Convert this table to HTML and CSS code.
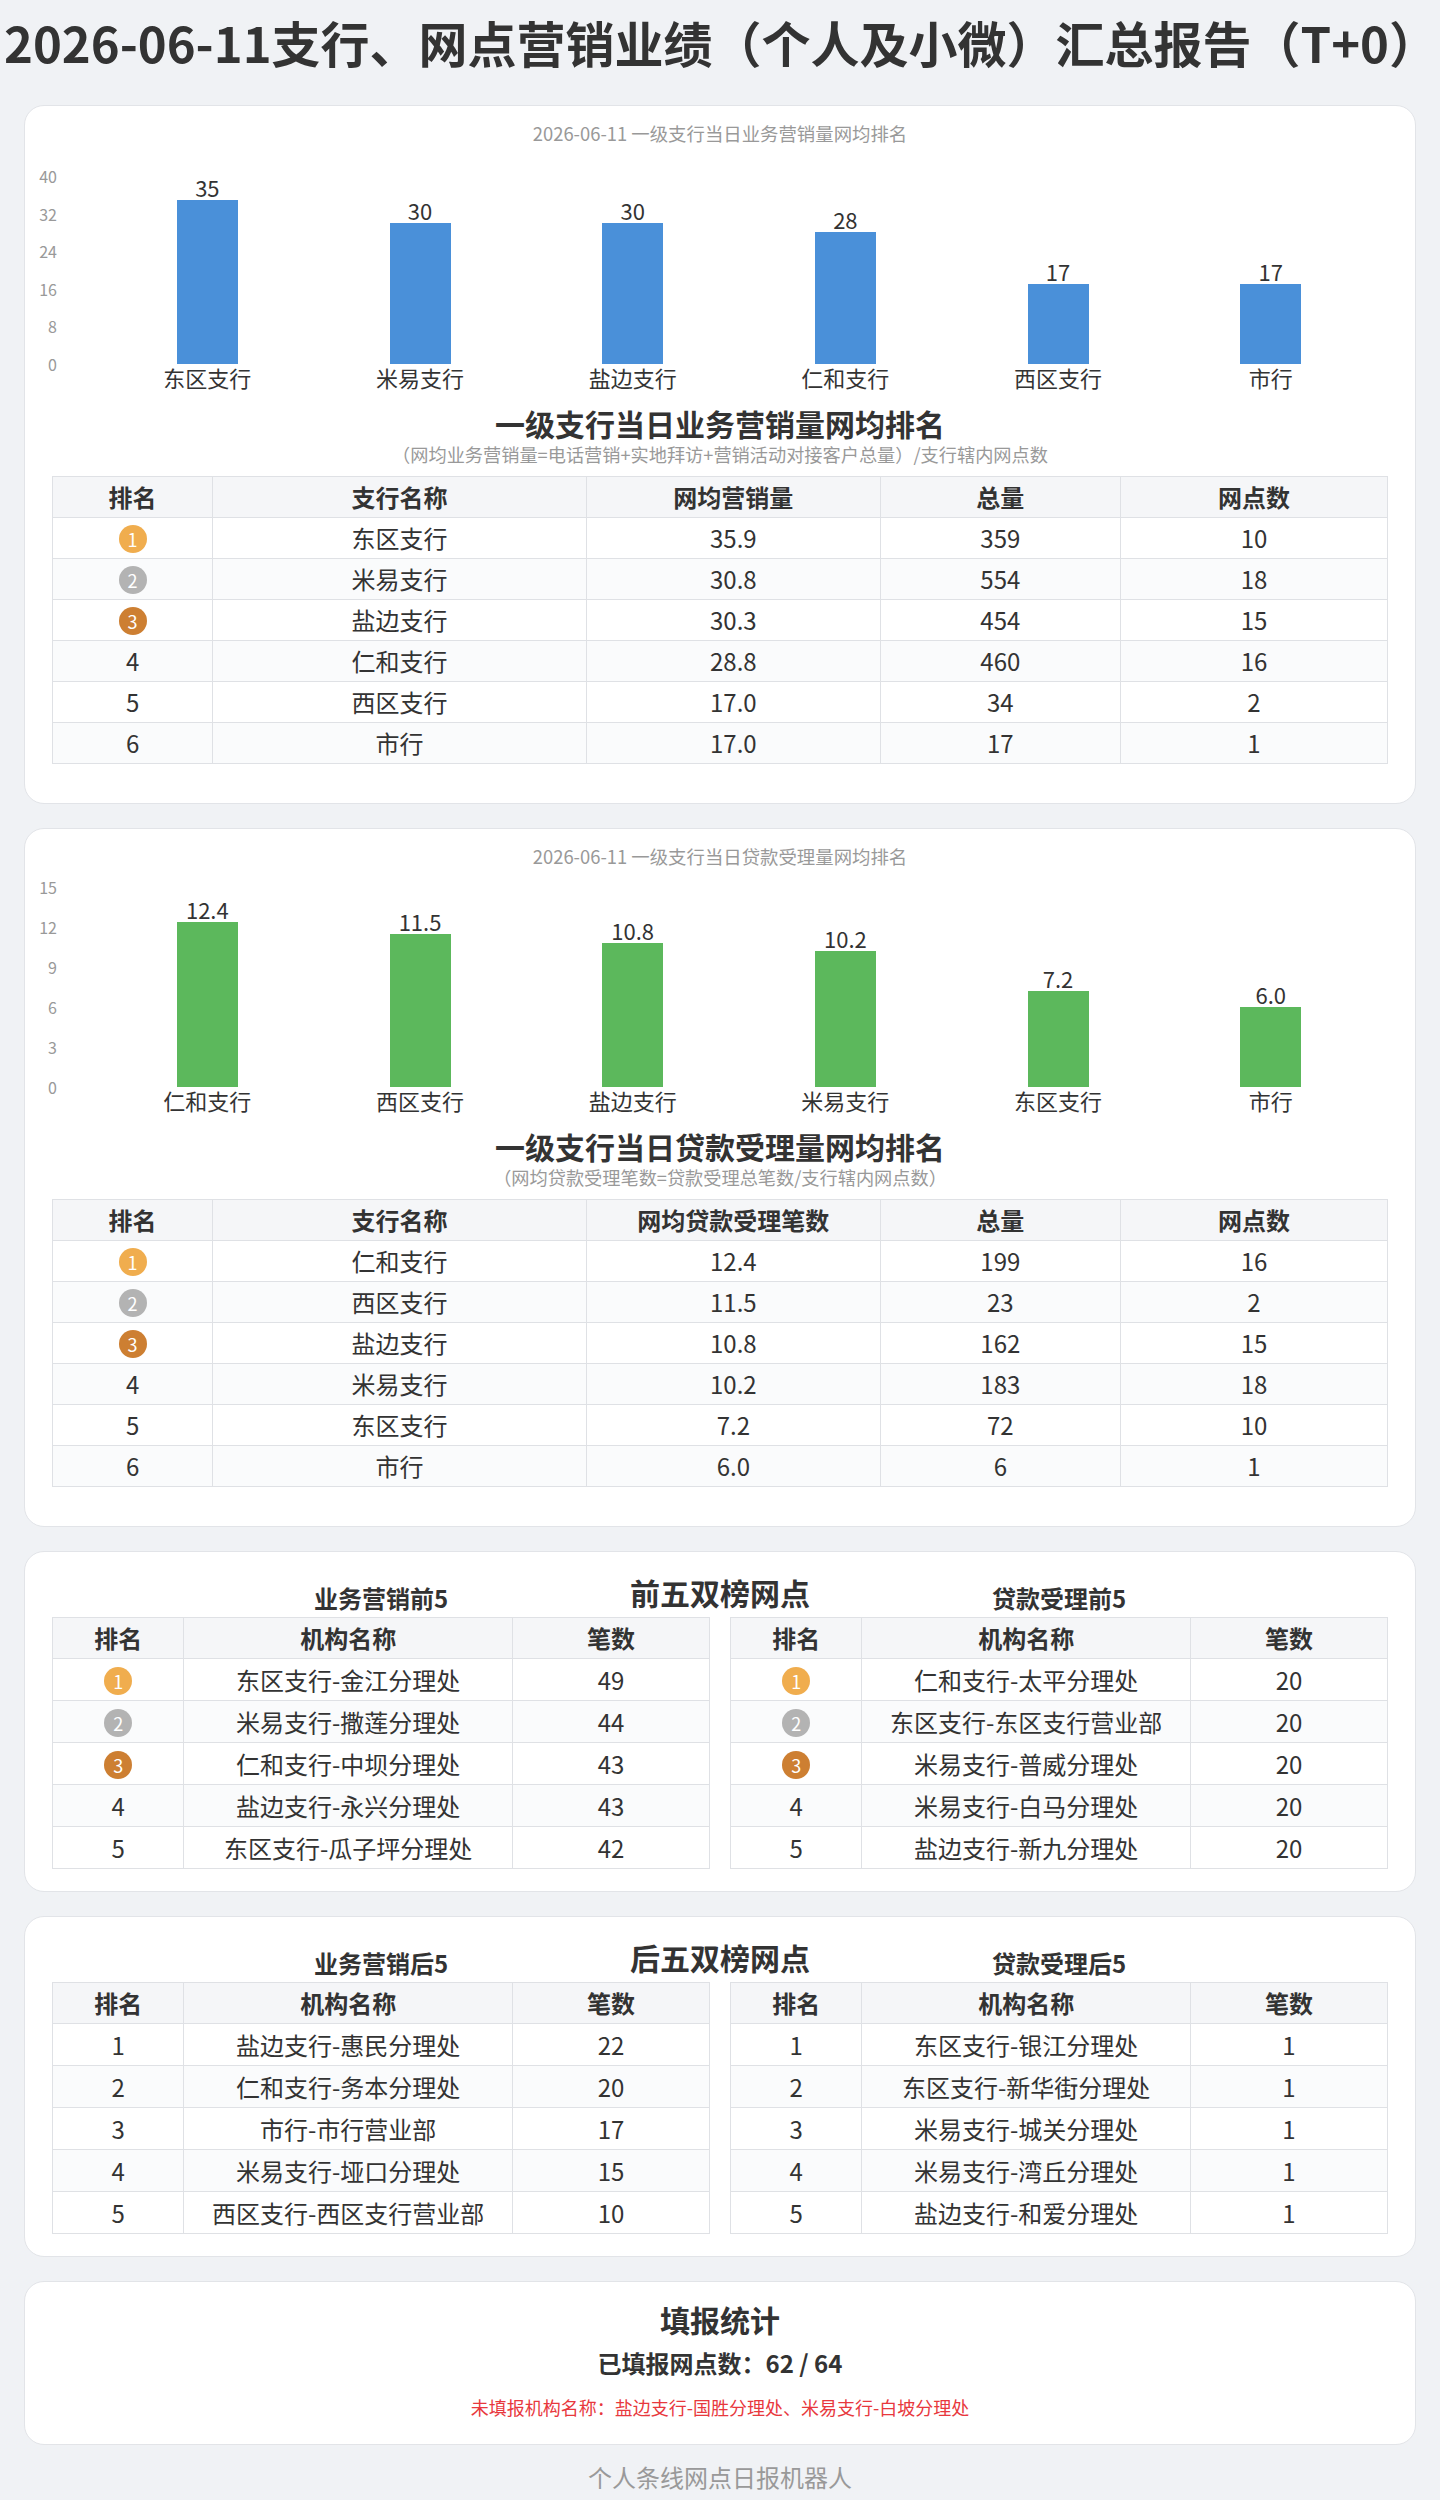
FILE: index.html
```html
<!DOCTYPE html>
<html lang="zh-CN">
<head>
<meta charset="utf-8">
<title>2026-06-11支行、网点营销业绩（个人及小微）汇总报告（T+0）</title>
<link rel="stylesheet" href="styles.css">
</head>
<body>
<h1 class="page-title">2026-06-11支行、网点营销业绩（个人及小微）汇总报告（T+0）</h1>
<main class="page">

  <section class="card chart-card">
    <div class="chart-title">2026-06-11 一级支行当日业务营销量网均排名</div>
    <div class="plot-row">
      <div class="y-axis">
        <div class="ticks" style="height:188px"><span>40</span><span>32</span><span>24</span><span>16</span><span>8</span><span>0</span></div>
      </div>
      <div class="bars">
        <div class="bar-col"><span class="bar-val">35</span><div class="bar blue" style="height:164.5px"></div></div>
        <div class="bar-col"><span class="bar-val">30</span><div class="bar blue" style="height:141px"></div></div>
        <div class="bar-col"><span class="bar-val">30</span><div class="bar blue" style="height:141px"></div></div>
        <div class="bar-col"><span class="bar-val">28</span><div class="bar blue" style="height:131.6px"></div></div>
        <div class="bar-col"><span class="bar-val">17</span><div class="bar blue" style="height:79.9px"></div></div>
        <div class="bar-col"><span class="bar-val">17</span><div class="bar blue" style="height:79.9px"></div></div>
      </div>
    </div>
    <div class="cat-row"><span>东区支行</span><span>米易支行</span><span>盐边支行</span><span>仁和支行</span><span>西区支行</span><span>市行</span></div>
    <h2 class="rank-title">一级支行当日业务营销量网均排名</h2>
    <p class="rank-sub">（网均业务营销量=电话营销+实地拜访+营销活动对接客户总量）/支行辖内网点数</p>
    <table class="data-table rank-table">
      <colgroup><col class="c12"><col class="c28"><col class="c22"><col class="c18"><col class="c20"></colgroup>
      <thead><tr><th>排名</th><th>支行名称</th><th>网均营销量</th><th>总量</th><th>网点数</th></tr></thead>
      <tbody>
        <tr><td><span class="medal gold">1</span></td><td>东区支行</td><td>35.9</td><td>359</td><td>10</td></tr>
        <tr><td><span class="medal silver">2</span></td><td>米易支行</td><td>30.8</td><td>554</td><td>18</td></tr>
        <tr><td><span class="medal bronze">3</span></td><td>盐边支行</td><td>30.3</td><td>454</td><td>15</td></tr>
        <tr><td>4</td><td>仁和支行</td><td>28.8</td><td>460</td><td>16</td></tr>
        <tr><td>5</td><td>西区支行</td><td>17.0</td><td>34</td><td>2</td></tr>
        <tr><td>6</td><td>市行</td><td>17.0</td><td>17</td><td>1</td></tr>
      </tbody>
    </table>
  </section>

  <section class="card chart-card">
    <div class="chart-title">2026-06-11 一级支行当日贷款受理量网均排名</div>
    <div class="plot-row">
      <div class="y-axis">
        <div class="ticks" style="height:200px"><span>15</span><span>12</span><span>9</span><span>6</span><span>3</span><span>0</span></div>
      </div>
      <div class="bars">
        <div class="bar-col"><span class="bar-val">12.4</span><div class="bar green" style="height:165.3px"></div></div>
        <div class="bar-col"><span class="bar-val">11.5</span><div class="bar green" style="height:153.3px"></div></div>
        <div class="bar-col"><span class="bar-val">10.8</span><div class="bar green" style="height:144px"></div></div>
        <div class="bar-col"><span class="bar-val">10.2</span><div class="bar green" style="height:136px"></div></div>
        <div class="bar-col"><span class="bar-val">7.2</span><div class="bar green" style="height:96px"></div></div>
        <div class="bar-col"><span class="bar-val">6.0</span><div class="bar green" style="height:80px"></div></div>
      </div>
    </div>
    <div class="cat-row"><span>仁和支行</span><span>西区支行</span><span>盐边支行</span><span>米易支行</span><span>东区支行</span><span>市行</span></div>
    <h2 class="rank-title">一级支行当日贷款受理量网均排名</h2>
    <p class="rank-sub">（网均贷款受理笔数=贷款受理总笔数/支行辖内网点数）</p>
    <table class="data-table rank-table">
      <colgroup><col class="c12"><col class="c28"><col class="c22"><col class="c18"><col class="c20"></colgroup>
      <thead><tr><th>排名</th><th>支行名称</th><th>网均贷款受理笔数</th><th>总量</th><th>网点数</th></tr></thead>
      <tbody>
        <tr><td><span class="medal gold">1</span></td><td>仁和支行</td><td>12.4</td><td>199</td><td>16</td></tr>
        <tr><td><span class="medal silver">2</span></td><td>西区支行</td><td>11.5</td><td>23</td><td>2</td></tr>
        <tr><td><span class="medal bronze">3</span></td><td>盐边支行</td><td>10.8</td><td>162</td><td>15</td></tr>
        <tr><td>4</td><td>米易支行</td><td>10.2</td><td>183</td><td>18</td></tr>
        <tr><td>5</td><td>东区支行</td><td>7.2</td><td>72</td><td>10</td></tr>
        <tr><td>6</td><td>市行</td><td>6.0</td><td>6</td><td>1</td></tr>
      </tbody>
    </table>
  </section>

  <section class="card dual-card">
    <h2 class="dual-title">前五双榜网点</h2>
    <div class="dual-grid">
      <div class="dual-col">
        <h3 class="dual-sub">业务营销前5</h3>
        <table class="data-table dual-table">
          <colgroup><col class="c20"><col class="c50"><col class="c30"></colgroup>
          <thead><tr><th>排名</th><th>机构名称</th><th>笔数</th></tr></thead>
          <tbody>
            <tr><td><span class="medal gold">1</span></td><td>东区支行-金江分理处</td><td>49</td></tr>
            <tr><td><span class="medal silver">2</span></td><td>米易支行-撒莲分理处</td><td>44</td></tr>
            <tr><td><span class="medal bronze">3</span></td><td>仁和支行-中坝分理处</td><td>43</td></tr>
            <tr><td>4</td><td>盐边支行-永兴分理处</td><td>43</td></tr>
            <tr><td>5</td><td>东区支行-瓜子坪分理处</td><td>42</td></tr>
          </tbody>
        </table>
      </div>
      <div class="dual-col">
        <h3 class="dual-sub">贷款受理前5</h3>
        <table class="data-table dual-table">
          <colgroup><col class="c20"><col class="c50"><col class="c30"></colgroup>
          <thead><tr><th>排名</th><th>机构名称</th><th>笔数</th></tr></thead>
          <tbody>
            <tr><td><span class="medal gold">1</span></td><td>仁和支行-太平分理处</td><td>20</td></tr>
            <tr><td><span class="medal silver">2</span></td><td>东区支行-东区支行营业部</td><td>20</td></tr>
            <tr><td><span class="medal bronze">3</span></td><td>米易支行-普威分理处</td><td>20</td></tr>
            <tr><td>4</td><td>米易支行-白马分理处</td><td>20</td></tr>
            <tr><td>5</td><td>盐边支行-新九分理处</td><td>20</td></tr>
          </tbody>
        </table>
      </div>
    </div>
  </section>

  <section class="card dual-card">
    <h2 class="dual-title">后五双榜网点</h2>
    <div class="dual-grid">
      <div class="dual-col">
        <h3 class="dual-sub">业务营销后5</h3>
        <table class="data-table dual-table">
          <colgroup><col class="c20"><col class="c50"><col class="c30"></colgroup>
          <thead><tr><th>排名</th><th>机构名称</th><th>笔数</th></tr></thead>
          <tbody>
            <tr><td>1</td><td>盐边支行-惠民分理处</td><td>22</td></tr>
            <tr><td>2</td><td>仁和支行-务本分理处</td><td>20</td></tr>
            <tr><td>3</td><td>市行-市行营业部</td><td>17</td></tr>
            <tr><td>4</td><td>米易支行-垭口分理处</td><td>15</td></tr>
            <tr><td>5</td><td>西区支行-西区支行营业部</td><td>10</td></tr>
          </tbody>
        </table>
      </div>
      <div class="dual-col">
        <h3 class="dual-sub">贷款受理后5</h3>
        <table class="data-table dual-table">
          <colgroup><col class="c20"><col class="c50"><col class="c30"></colgroup>
          <thead><tr><th>排名</th><th>机构名称</th><th>笔数</th></tr></thead>
          <tbody>
            <tr><td>1</td><td>东区支行-银江分理处</td><td>1</td></tr>
            <tr><td>2</td><td>东区支行-新华街分理处</td><td>1</td></tr>
            <tr><td>3</td><td>米易支行-城关分理处</td><td>1</td></tr>
            <tr><td>4</td><td>米易支行-湾丘分理处</td><td>1</td></tr>
            <tr><td>5</td><td>盐边支行-和爱分理处</td><td>1</td></tr>
          </tbody>
        </table>
      </div>
    </div>
  </section>

  <section class="card stat-card">
    <h2 class="stat-title">填报统计</h2>
    <div class="stat-count">已填报网点数：62 / 64</div>
    <div class="stat-missing">未填报机构名称：盐边支行-国胜分理处、米易支行-白坡分理处</div>
  </section>

  <footer class="page-footer">个人条线网点日报机器人</footer>
</main>
</body>
</html>
```

FILE: styles.css
```css
* { box-sizing: border-box; }

html, body {
  margin: 0;
  padding: 0;
  background: #f0f2f5;
}

body {
  font-family: "Noto Sans CJK SC", "Noto Sans", sans-serif;
  color: #333333;
}

.page-title {
  margin: 13px 0 0 0;
  padding-left: 4px;
  font-size: 49px;
  line-height: 58px;
  font-weight: 700;
  color: #333333;
  white-space: nowrap;
}

.page {
  padding: 34px 24px 0 24px;
  display: flex;
  flex-direction: column;
  gap: 24px;
}

.card {
  background: #ffffff;
  border: 1px solid #e2e4e8;
  border-radius: 20px;
  padding: 0 27px;
}

/* ---------- chart cards ---------- */
.chart-card {
  padding-top: 15px;
  padding-bottom: 39px;
}

.chart-title {
  text-align: center;
  font-size: 18.4px;
  line-height: 24px;
  color: #999999;
}

.plot-row {
  display: flex;
  height: 200px;
  margin: 19px 11px 0 -15px;
}

.y-axis {
  width: 64px;
  display: flex;
  flex-direction: column;
  justify-content: flex-end;
}

.ticks {
  display: flex;
  flex-direction: column;
  justify-content: space-between;
}

.ticks span {
  height: 0;
  display: flex;
  align-items: center;
  justify-content: flex-end;
  padding-right: 44px;
  font-size: 16px;
  line-height: 20px;
  color: #999999;
}

.bars {
  flex: 1;
  display: flex;
  align-items: flex-end;
}

.bar-col {
  flex: 1;
  display: flex;
  flex-direction: column;
  align-items: center;
}

.bar-val {
  font-size: 22px;
  line-height: 26px;
  color: #333333;
}

.bar {
  width: 61px;
}

.bar.blue { background: #4a90d9; }
.bar.green { background: #5cb85c; }

.cat-row {
  display: flex;
  margin: 0 11px 0 49px;
}

.cat-row span {
  flex: 1;
  text-align: center;
  font-size: 22px;
  line-height: 26px;
  color: #333333;
}

.rank-title {
  margin: 15.5px 0 0 0;
  text-align: center;
  font-size: 30px;
  line-height: 34px;
  font-weight: 700;
  color: #333333;
}

.rank-sub {
  margin: 3px 0 11.5px 0;
  text-align: center;
  font-size: 18.2px;
  line-height: 22px;
  color: #999999;
}

/* ---------- tables ---------- */
.data-table {
  width: 100%;
  border-collapse: collapse;
  table-layout: fixed;
}

.data-table th,
.data-table td {
  border: 1px solid #dfe1e5;
  text-align: center;
  padding: 0;
  font-size: 24px;
  color: #333333;
  white-space: nowrap;
}

.data-table th {
  background: #f5f6f8;
  font-weight: 700;
  line-height: 40px;
}

.data-table td {
  line-height: 40px;
}

.data-table tbody tr:nth-child(even) td {
  background: #fafbfc;
}

.dual-table td {
  line-height: 41px;
}

.c12 { width: 12%; }
.c18 { width: 18%; }
.c20 { width: 20%; }
.c22 { width: 22%; }
.c28 { width: 28%; }
.c30 { width: 30%; }
.c50 { width: 50%; }

.medal {
  display: inline-flex;
  align-items: center;
  justify-content: center;
  width: 28px;
  height: 28px;
  border-radius: 50%;
  color: #ffffff;
  font-size: 18px;
  line-height: 28px;
  vertical-align: middle;
  position: relative;
  top: -2px;
}

.medal.gold { background: #f0ad4e; }
.medal.silver { background: #b3b3b3; }
.medal.bronze { background: #cd7f32; }

/* ---------- dual cards ---------- */
.dual-card {
  padding-top: 22px;
  padding-bottom: 22px;
}

.dual-title {
  margin: 0;
  text-align: center;
  font-size: 30px;
  line-height: 36px;
  font-weight: 700;
  color: #333333;
}

.dual-grid {
  display: grid;
  grid-template-columns: 1fr 1fr;
  column-gap: 20px;
  margin-top: -26px;
}

.dual-sub {
  margin: 0 0 5px 0;
  text-align: center;
  font-size: 24px;
  line-height: 28px;
  font-weight: 700;
  color: #333333;
}

/* ---------- stat card ---------- */
.stat-card {
  padding-top: 19px;
  padding-bottom: 25px;
  text-align: center;
}

.stat-title {
  margin: 0;
  font-size: 30px;
  line-height: 36px;
  font-weight: 700;
  color: #333333;
}

.stat-count {
  margin-top: 11px;
  font-size: 24px;
  line-height: 30px;
  font-weight: 700;
  color: #333333;
}

.stat-missing {
  margin-top: 17px;
  font-size: 18px;
  line-height: 24px;
  color: #e8383d;
}

.page-footer {
  margin-top: -7px;
  text-align: center;
  font-size: 24px;
  line-height: 30px;
  color: #999999;
}
```
